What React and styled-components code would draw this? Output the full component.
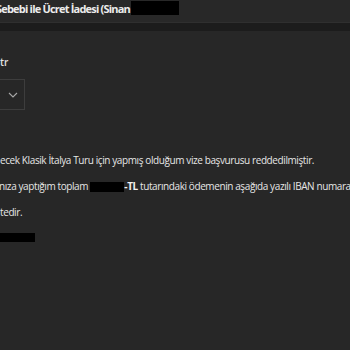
import React from "react";
import styled, { createGlobalStyle } from "styled-components";

const Global = createGlobalStyle`
  html, body { margin: 0; padding: 0; background: #272727; overflow: hidden; }
  body { font-family: "Open Sans", "Noto Sans", sans-serif; color: #e8e8e8; }
`;

const Page = styled.div`
  width: 350px;
  height: 350px;
  display: flex;
  flex-direction: column;
  background: #272727;
  overflow: hidden;
`;

const TitleBar = styled.div`
  height: 22px;
  display: flex;
  align-items: center;
  background: #282828;
  overflow: hidden;
`;

const Title = styled.span`
  font-size: 11px;
  font-weight: 700;
  letter-spacing: -0.8px;
  white-space: nowrap;
  color: #ececec;
  margin-left: -4px;
  margin-top: -6px;
`;

const Redact = styled.span`
  display: inline-block;
  background: #000;
  width: ${(p) => p.$w}px;
  height: ${(p) => p.$h}px;
  vertical-align: middle;
`;

const TitleRedact = styled(Redact)`
  margin-top: -6px;
  margin-left: 1px;
`;

const Band = styled.div`
  height: 8px;
  background: #1c1c1c;
  border-top: 1px solid #2f2f2f;
`;

const Body = styled.div`
  display: flex;
  flex-direction: column;
  padding-top: 24px;
`;

const Recipient = styled.div`
  font-size: 10px;
  font-weight: 600;
  line-height: 14px;
  height: 14px;
  color: #e4e4e4;
  white-space: nowrap;
`;

const Select = styled.div`
  margin-top: 10px;
  margin-left: -2px;
  width: 27px;
  height: 31px;
  border: 1px solid #3d3d3d;
  display: flex;
  align-items: center;
  justify-content: flex-end;
  padding-right: 6px;
  box-sizing: border-box;
`;

const Message = styled.div`
  margin-top: 37px;
  display: flex;
  flex-direction: column;
`;

const Line = styled.div`
  font-size: 10px;
  line-height: 26px;
  height: 26px;
  white-space: nowrap;
  color: #e6e6e6;
  letter-spacing: -0.4px;
  margin-left: ${(p) => p.$shift || 0}px;
`;

const Strong = styled.b`
  font-weight: 700;
  color: #f2f2f2;
`;

const Signature = styled(Redact)`
  display: block;
  margin-top: 8px;
`;

export default function App() {
  return (
    <Page>
      <Global />
      <TitleBar>
        <Title>Sebebi ile Ücret İadesi (Sinan</Title>
        <TitleRedact $w={48} $h={14} />
      </TitleBar>
      <Band />
      <Body>
        <Recipient>tr</Recipient>
        <Select>
          <svg width="10" height="6" viewBox="0 0 10 6" fill="none">
            <path d="M1 1l4 4 4-4" stroke="#a8a8a8" strokeWidth="1.1" />
          </svg>
        </Select>
        <Message>
          <Line>ecek Klasik İtalya Turu için yapmış olduğum vize başvurusu reddedilmiştir.</Line>
          <Line $shift={-1}>
            nıza yaptığım toplam <Redact $w={34} $h={10} />
            <Strong>-TL</Strong> tutarındaki ödemenin aşağıda yazılı IBAN numarasına
          </Line>
          <Line>tedir.</Line>
          <Signature $w={35} $h={9} />
        </Message>
      </Body>
    </Page>
  );
}
